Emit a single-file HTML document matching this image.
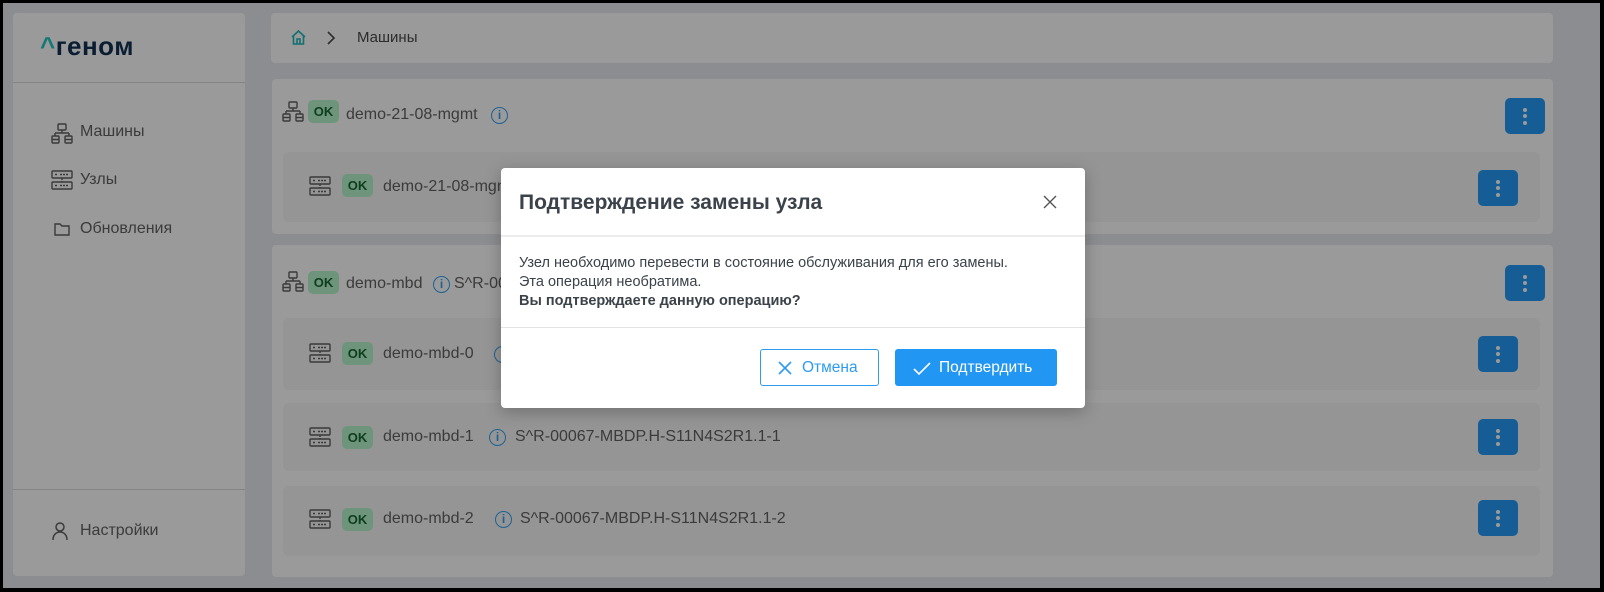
<!DOCTYPE html>
<html><head><meta charset="utf-8"><style>
*{box-sizing:border-box;margin:0;padding:0}
body{width:1604px;height:592px;background:#000;font-family:"Liberation Sans",sans-serif;overflow:hidden;position:relative}
.frame{position:absolute;left:3px;top:3px;width:1597px;height:585px;background:#e3e4e8}
.a{position:absolute}
.card{position:absolute;background:#f8f8f8;border-radius:4px}
.inner{position:absolute;background:#f0f0f0;border-radius:6px}
.t{position:absolute;color:#606060;font-size:16px;white-space:nowrap}
.ok{position:absolute;width:31px;height:23px;background:#b2f0c9;border-radius:5px;color:#186530;font-weight:bold;font-size:13px;text-align:center;line-height:23px}
.btn{position:absolute;width:40px;height:36px;background:#2396ef;border-radius:5px}
.btn i{position:absolute;left:18px;width:4px;height:4px;border-radius:2px;background:#f8f8f8}
.info{position:absolute;width:17px;height:17px;border:1.5px solid #2f9ef0;border-radius:50%;color:#2f9ef0;font-size:12px;text-align:center;line-height:14px;font-weight:bold}
.ov{position:absolute;left:3px;top:3px;width:1597px;height:585px;background:rgba(0,0,0,0.38)}
</style></head><body>
<div class="frame"></div>
<!-- sidebar -->
<div class="card" style="left:13px;top:13px;width:232px;height:563px"></div>
<div class="a" style="left:13px;top:82px;width:232px;height:1px;background:#d6d6d6"></div>
<div class="a" style="left:13px;top:489px;width:232px;height:1px;background:#d6d6d6"></div>
<div class="t" style="left:40px;top:31px;font-size:26px;font-weight:bold;color:#132f52;letter-spacing:0.5px"><span style="color:#1fc4c1">^</span>геном</div>
<svg class="a" style="left:51px;top:123px" width="22" height="22" viewBox="0 0 22 22" fill="none" stroke="#5e5e5e" stroke-width="1.4"><rect x="7" y="1" width="8" height="6" rx="1"/><path d="M4 10h14M11 7v3M4 10v3M18 10v3"/><rect x="1" y="13" width="7" height="7" rx="1"/><rect x="14" y="13" width="7" height="7" rx="1"/><path d="M1 16.5h7M14 16.5h7"/></svg>
<div class="t" style="left:80px;top:123px">Машины</div>
<svg class="a" style="left:51px;top:170px" width="22" height="20" viewBox="0 0 22 20" fill="none" stroke="#5e5e5e" stroke-width="1.4"><rect x="1" y="1" width="20" height="7" rx="1"/><rect x="1" y="12" width="20" height="7" rx="1"/><path d="M11 8v4M4 4.5h3M4 15.5h3M9 4.5h8M9 15.5h8" stroke-dasharray="2 1"/></svg>
<div class="t" style="left:80px;top:171px">Узлы</div>
<svg class="a" style="left:54px;top:222px" width="16" height="14" viewBox="0 0 16 14" fill="none" stroke="#5e5e5e" stroke-width="1.4"><path d="M1 2h5l2 2h7v9H1z"/></svg>
<div class="t" style="left:80px;top:220px">Обновления</div>
<svg class="a" style="left:52px;top:522px" width="16" height="18" viewBox="0 0 16 18" fill="none" stroke="#5e5e5e" stroke-width="1.5"><circle cx="8" cy="5" r="4"/><path d="M1 18c0-5 3-8 7-8s7 3 7 8"/></svg>
<div class="t" style="left:80px;top:522px">Настройки</div>
<!-- breadcrumb -->
<div class="card" style="left:271px;top:13px;width:1282px;height:50px"></div>
<svg class="a" style="left:290px;top:29px" width="17" height="17" viewBox="0 0 17 17" fill="none" stroke="#1fb5b5" stroke-width="1.6"><path d="M2 8L8.5 2 15 8M3.5 7v8h10V7M7 15v-5h3v5"/></svg>
<svg class="a" style="left:326px;top:31px" width="10" height="14" viewBox="0 0 10 14" fill="none" stroke="#4a4a4a" stroke-width="1.6"><path d="M2 1l6 6-6 6"/></svg>
<div class="t" style="left:357px;top:29px;font-size:15px;color:#484848">Машины</div>
<!-- card1 -->
<div class="card" style="left:272px;top:79px;width:1281px;height:155px"></div>
<svg class="a" style="left:282px;top:101px" width="22" height="22" viewBox="0 0 22 22" fill="none" stroke="#5e5e5e" stroke-width="1.4"><rect x="7" y="1" width="8" height="6" rx="1"/><path d="M4 10h14M11 7v3M4 10v3M18 10v3"/><rect x="1" y="13" width="7" height="7" rx="1"/><rect x="14" y="13" width="7" height="7" rx="1"/><path d="M1 16.5h7M14 16.5h7"/></svg>
<div class="ok" style="left:308px;top:100px">OK</div>
<div class="t" style="left:346px;top:106px">demo-21-08-mgmt</div>
<div class="info" style="left:491px;top:107px">i</div>
<div class="btn" style="left:1505px;top:98px"><i style="top:10px"></i><i style="top:16px"></i><i style="top:23px"></i></div>
<div class="inner" style="left:283px;top:152px;width:1257px;height:70px"></div>
<svg class="a" style="left:309px;top:176px" width="22" height="20" viewBox="0 0 22 20" fill="none" stroke="#5e5e5e" stroke-width="1.4"><rect x="1" y="1" width="20" height="7" rx="1"/><rect x="1" y="12" width="20" height="7" rx="1"/><path d="M11 8v4M4 4.5h3M4 15.5h3M9 4.5h8M9 15.5h8" stroke-dasharray="2 1"/></svg>
<div class="ok" style="left:342px;top:174px">OK</div>
<div class="t" style="left:383px;top:178px">demo-21-08-mgmt-0</div>
<div class="btn" style="left:1478px;top:170px"><i style="top:10px"></i><i style="top:16px"></i><i style="top:23px"></i></div>
<!-- card2 -->
<div class="card" style="left:272px;top:245px;width:1281px;height:332px"></div>
<svg class="a" style="left:282px;top:271px" width="22" height="22" viewBox="0 0 22 22" fill="none" stroke="#5e5e5e" stroke-width="1.4"><rect x="7" y="1" width="8" height="6" rx="1"/><path d="M4 10h14M11 7v3M4 10v3M18 10v3"/><rect x="1" y="13" width="7" height="7" rx="1"/><rect x="14" y="13" width="7" height="7" rx="1"/><path d="M1 16.5h7M14 16.5h7"/></svg>
<div class="ok" style="left:308px;top:271px">OK</div>
<div class="t" style="left:346px;top:275px">demo-mbd</div>
<div class="info" style="left:433px;top:276px">i</div>
<div class="t" style="left:454px;top:275px">S^R-00067</div>
<div class="btn" style="left:1505px;top:265px"><i style="top:10px"></i><i style="top:16px"></i><i style="top:23px"></i></div>

<div class="inner" style="left:283px;top:318px;width:1257px;height:72px"></div>
<svg class="a" style="left:309px;top:343px" width="22" height="20" viewBox="0 0 22 20" fill="none" stroke="#5e5e5e" stroke-width="1.4"><rect x="1" y="1" width="20" height="7" rx="1"/><rect x="1" y="12" width="20" height="7" rx="1"/><path d="M11 8v4M4 4.5h3M4 15.5h3M9 4.5h8M9 15.5h8" stroke-dasharray="2 1"/></svg>
<div class="ok" style="left:342px;top:342px">OK</div>
<div class="t" style="left:383px;top:345px">demo-mbd-0</div>
<div class="info" style="left:494px;top:346px">i</div>
<div class="btn" style="left:1478px;top:336px"><i style="top:10px"></i><i style="top:16px"></i><i style="top:23px"></i></div>

<div class="inner" style="left:283px;top:403px;width:1257px;height:68px"></div>
<svg class="a" style="left:309px;top:427px" width="22" height="20" viewBox="0 0 22 20" fill="none" stroke="#5e5e5e" stroke-width="1.4"><rect x="1" y="1" width="20" height="7" rx="1"/><rect x="1" y="12" width="20" height="7" rx="1"/><path d="M11 8v4M4 4.5h3M4 15.5h3M9 4.5h8M9 15.5h8" stroke-dasharray="2 1"/></svg>
<div class="ok" style="left:342px;top:426px">OK</div>
<div class="t" style="left:383px;top:428px">demo-mbd-1</div>
<div class="info" style="left:489px;top:429px">i</div>
<div class="t" style="left:515px;top:428px">S^R-00067-MBDP.H-S11N4S2R1.1-1</div>
<div class="btn" style="left:1478px;top:419px"><i style="top:10px"></i><i style="top:16px"></i><i style="top:23px"></i></div>

<div class="inner" style="left:283px;top:486px;width:1257px;height:70px"></div>
<svg class="a" style="left:309px;top:509px" width="22" height="20" viewBox="0 0 22 20" fill="none" stroke="#5e5e5e" stroke-width="1.4"><rect x="1" y="1" width="20" height="7" rx="1"/><rect x="1" y="12" width="20" height="7" rx="1"/><path d="M11 8v4M4 4.5h3M4 15.5h3M9 4.5h8M9 15.5h8" stroke-dasharray="2 1"/></svg>
<div class="ok" style="left:342px;top:508px">OK</div>
<div class="t" style="left:383px;top:510px">demo-mbd-2</div>
<div class="info" style="left:495px;top:511px">i</div>
<div class="t" style="left:520px;top:510px">S^R-00067-MBDP.H-S11N4S2R1.1-2</div>
<div class="btn" style="left:1478px;top:500px"><i style="top:10px"></i><i style="top:16px"></i><i style="top:23px"></i></div>

<div class="ov"></div>
<!-- modal -->
<div class="a" style="left:501px;top:168px;width:584px;height:240px;background:#fff;border-radius:4px;box-shadow:0 4px 16px rgba(0,0,0,0.25)"></div>
<div class="t" style="left:519px;top:191px;font-size:21px;font-weight:bold;color:#3b4249">Подтверждение замены узла</div>
<svg class="a" style="left:1043px;top:195px" width="14" height="14" viewBox="0 0 14 14" stroke="#555" stroke-width="1.4"><path d="M1 1l12 12M13 1L1 13"/></svg>
<div class="a" style="left:501px;top:235px;width:584px;height:2px;background:#ececec"></div>
<div class="t" style="left:519px;top:254px;font-size:14.5px;color:#3b4249;line-height:19px">Узел необходимо перевести в состояние обслуживания для его замены.<br>Эта операция необратима.<br><b>Вы подтверждаете данную операцию?</b></div>
<div class="a" style="left:501px;top:327px;width:584px;height:1px;background:#e2e2e2"></div>
<div class="a" style="left:760px;top:349px;width:119px;height:37px;border:1px solid #2d9cf0;border-radius:3px;background:#fff"></div>
<svg class="a" style="left:778px;top:361px" width="14" height="14" viewBox="0 0 14 14" stroke="#2d9cf0" stroke-width="1.6"><path d="M1 1l12 12M13 1L1 13"/></svg>
<div class="t" style="left:802px;top:359px;font-size:15.5px;color:#2d9cf0">Отмена</div>
<div class="a" style="left:895px;top:349px;width:162px;height:37px;background:#2196f3;border-radius:3px"></div>
<svg class="a" style="left:913px;top:362px" width="18" height="13" viewBox="0 0 18 13" fill="none" stroke="#fff" stroke-width="1.6"><path d="M1 7l5 5L17 1"/></svg>
<div class="t" style="left:939px;top:359px;font-size:15.5px;color:#fff">Подтвердить</div>
</body></html>
